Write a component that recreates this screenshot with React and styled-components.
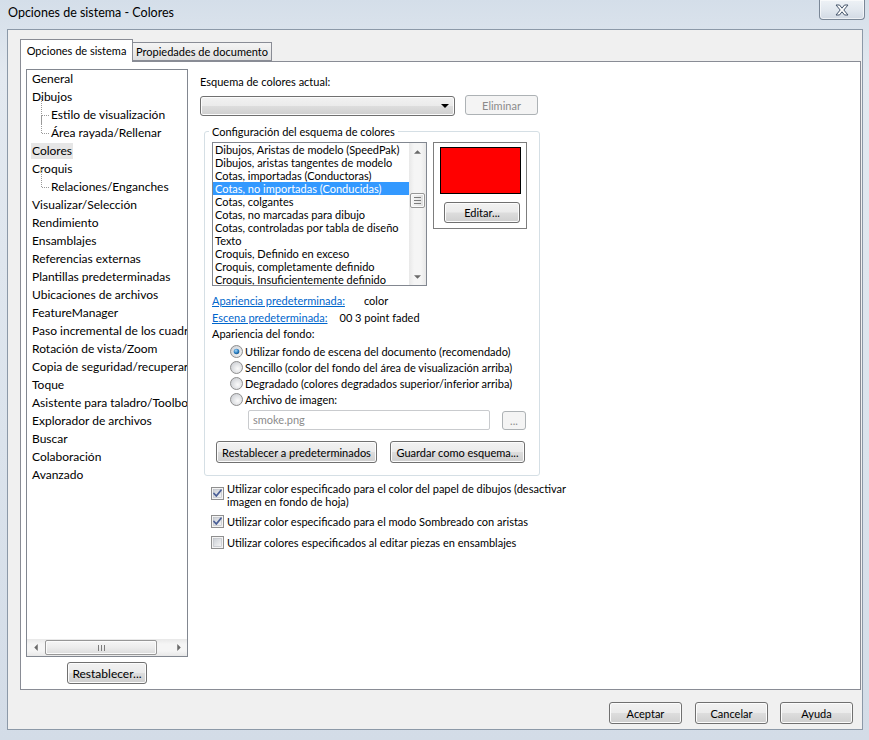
import React from 'react';
import styled, { createGlobalStyle, css } from 'styled-components';

const GlobalStyle = createGlobalStyle`
  html, body { margin: 0; padding: 0; }
  body {
    font-family: Lato, "Noto Sans", sans-serif;
    font-size: 11px;
    color: #000;
    background: #dce5ee;
  }
  * { box-sizing: border-box; }
`;

const btnFace = css`
  border: 1px solid #707070;
  border-radius: 3px;
  background: linear-gradient(180deg, #f2f2f2 0%, #ebebeb 48%, #dddddd 52%, #cfcfcf 100%);
  box-shadow: inset 0 0 0 1px #fcfcfc;
`;

const Window = styled.div`
  width: 869px;
  height: 740px;
  display: flex;
  flex-direction: column;
  overflow: hidden;
  background: linear-gradient(180deg, #d4dee9 0%, #e3e9f0 10%, #dbe3ec 60%, #d3dce7 100%);
`;

const TitleBar = styled.div`
  height: 29px;
  flex: none;
  display: flex;
  align-items: flex-start;
`;

const Title = styled.div`
  padding: 5px 0 0 8px;
  font-size: 12.5px;
  line-height: 16px;
`;

const CloseBtn = styled.div`
  margin-left: auto;
  margin-right: 4px;
  width: 46px;
  height: 20px;
  border: 1px solid #7a8797;
  border-top: none;
  border-radius: 0 0 4px 4px;
  background: linear-gradient(180deg, #eef2f6 0%, #e2e8ef 50%, #d2dae4 100%);
  box-shadow: inset 0 0 0 1px rgba(255,255,255,0.6);
  display: flex;
  align-items: center;
  justify-content: center;
`;

const Client = styled.div`
  flex: 1;
  margin: 0 6px 10px 7px;
  border: 1px solid #8c99a8;
  background: #f0f0f0;
  display: flex;
  flex-direction: column;
  padding: 9px 1px 5px 12px;
`;

const TabRow = styled.div`
  display: flex;
  align-items: flex-end;
  height: 22px;
  position: relative;
  z-index: 1;
`;

const Tab = styled.div`
  height: ${p => (p.$active ? 23 : 19)}px;
  margin-bottom: ${p => (p.$active ? -1 : 0)}px;
  width: ${p => p.$w}px;
  border: 1px solid #898c95;
  border-bottom: ${p => (p.$active ? 'none' : '1px solid #898c95')};
  border-left: ${p => (p.$first ? '1px solid #898c95' : 'none')};
  background: ${p => (p.$active ? '#fff' : 'linear-gradient(180deg, #f4f4f4 0%, #ebebeb 50%, #dedede 100%)')};
  display: flex;
  align-items: center;
  justify-content: center;
  padding-bottom: ${p => (p.$active ? 1 : 0)}px;
  white-space: nowrap;
`;

const Panel = styled.div`
  flex: 1;
  border: 1px solid #898c95;
  background: #fff;
  display: flex;
  padding: 7px 5px 5px 5px;
  min-height: 0;
`;

const LeftCol = styled.div`
  width: 162px;
  flex: none;
  display: flex;
  flex-direction: column;
  align-items: center;
`;

const Tree = styled.div`
  width: 162px;
  height: 588px;
  border: 1px solid #828790;
  display: flex;
  flex-direction: column;
  overflow: hidden;
  font-size: 12px;
`;

const TreeList = styled.div`
  flex: 1;
  overflow: hidden;
`;

const TreeRow = styled.div`
  position: relative;
  height: 18px;
  line-height: 18px;
  white-space: nowrap;
  padding-left: ${p => (p.$child ? 24 : 5)}px;
  ${p => p.$child && css`
    &::before {
      content: '';
      position: absolute;
      left: 14px;
      top: -9px;
      height: ${p.$last ? 18 : 27}px;
      border-left: 1px dotted #9a9a9a;
    }
    &::after {
      content: '';
      position: absolute;
      left: 15px;
      top: 9px;
      width: 7px;
      border-top: 1px dotted #9a9a9a;
    }
  `}
`;

const TreeText = styled.span`
  display: inline-block;
  line-height: 16px;
  padding: 0 1px;
  margin-left: -1px;
  background: ${p => (p.$sel ? '#e6e6e6' : 'transparent')};
`;

const HScroll = styled.div`
  height: 17px;
  flex: none;
  display: flex;
  align-items: center;
  background: linear-gradient(180deg, #e8e8e8 0%, #f5f5f5 30%, #f5f5f5 70%, #e8e8e8 100%);
`;

const ArrowCell = styled.div`
  width: 17px;
  height: 17px;
  flex: none;
  display: flex;
  align-items: center;
  justify-content: center;
`;

const HThumb = styled.div`
  width: 112px;
  flex: none;
  height: 15px;
  margin-left: 1px;
  border: 1px solid #979797;
  border-radius: 2px;
  background: linear-gradient(180deg, #f6f6f6 0%, #ececec 50%, #dcdcdc 100%);
  box-shadow: inset 0 0 0 1px #fbfbfb;
  display: flex;
  align-items: center;
  justify-content: center;
  gap: 2px;
`;

const Spacer = styled.div`
  flex: 1;
`;

const GripLine = styled.span`
  width: ${p => (p.$v ? 1 : 7)}px;
  height: ${p => (p.$v ? 6 : 1)}px;
  background: #7c7c7c;
`;

const Btn = styled.button`
  width: ${p => p.$w}px;
  height: ${p => p.$h || 21}px;
  padding: 0;
  font: inherit;
  font-size: ${p => p.$fs || 11}px;
  color: #000;
  white-space: nowrap;
  flex: none;
  ${btnFace}
  ${p => p.disabled && css`
    color: #8b8b8b;
    border-color: #adb2b5;
    background: #f4f4f4;
    box-shadow: none;
  `}
  margin-top: ${p => p.$mt || 0}px;
  margin-left: ${p => p.$ml || 0}px;
`;

const RightCol = styled.div`
  margin-left: 12px;
  display: flex;
  flex-direction: column;
  align-items: flex-start;
`;

const Label = styled.div`
  line-height: 15px;
  white-space: nowrap;
  margin-top: ${p => p.$mt || 0}px;
`;

const SchemeRow = styled.div`
  display: flex;
  align-items: flex-start;
  margin-top: 6px;
`;

const Combo = styled.div`
  width: 255px;
  height: 20px;
  margin-top: 1px;
  ${btnFace}
  display: flex;
  align-items: center;
  justify-content: flex-end;
  padding-right: 5px;
`;

const ComboArrow = styled.span`
  width: 0;
  height: 0;
  border-left: 4px solid transparent;
  border-right: 4px solid transparent;
  border-top: 4px solid #000;
`;

const Group = styled.fieldset`
  margin: 8px 0 0 4px;
  padding: 0;
  width: 336px;
  border: 1px solid #d5dfe5;
  border-radius: 3px;
`;

const Legend = styled.legend`
  margin-left: 4px;
  padding: 0 3px;
  line-height: 15px;
`;

const GroupBody = styled.div`
  padding: 3px 7px 12px 7px;
  display: flex;
  flex-direction: column;
  align-items: flex-start;
`;

const TopRow = styled.div`
  display: flex;
  align-items: flex-start;
`;

const ListBox = styled.div`
  width: 215px;
  height: 144px;
  border: 1px solid #828790;
  display: flex;
  overflow: hidden;
`;

const ListItems = styled.div`
  flex: 1;
  overflow: hidden;
`;

const ListItem = styled.div`
  height: 13px;
  line-height: 13px;
  padding-left: 2px;
  white-space: nowrap;
  background: ${p => (p.$sel ? '#3399ff' : 'transparent')};
  color: ${p => (p.$sel ? '#fff' : '#000')};
`;

const VScroll = styled.div`
  width: 17px;
  flex: none;
  display: flex;
  flex-direction: column;
  align-items: center;
  background: linear-gradient(90deg, #e8e8e8 0%, #f5f5f5 30%, #f5f5f5 70%, #e8e8e8 100%);
`;

const VThumb = styled.div`
  width: 15px;
  height: 15px;
  margin-top: 33px;
  border: 1px solid #979797;
  border-radius: 2px;
  background: linear-gradient(90deg, #f6f6f6 0%, #ececec 50%, #dcdcdc 100%);
  box-shadow: inset 0 0 0 1px #fbfbfb;
  display: flex;
  flex-direction: column;
  align-items: center;
  justify-content: center;
  gap: 2px;
`;

const ColorPanel = styled.div`
  margin-left: 6px;
  width: 94px;
  height: 87px;
  border: 1px solid #7d7d7d;
  padding: 4px 0 0 6px;
  display: flex;
  flex-direction: column;
  align-items: flex-start;
`;

const Swatch = styled.div`
  width: 81px;
  height: 47px;
  border: 1px solid #000;
  background: ${p => p.$c};
`;

const InfoRow = styled.div`
  display: flex;
  line-height: 15px;
  white-space: nowrap;
  margin-top: ${p => p.$mt || 0}px;
`;

const Link = styled.span`
  color: #0066cc;
  text-decoration: underline;
`;

const Value = styled.span`
  margin-left: ${p => p.$gap}px;
`;

const RadioList = styled.div`
  margin-top: 2px;
  padding-left: 18px;
  display: flex;
  flex-direction: column;
`;

const RadioRow = styled.div`
  height: 16px;
  display: flex;
  align-items: center;
  gap: 2px;
  white-space: nowrap;
`;

const FileRow = styled.div`
  display: flex;
  align-items: flex-start;
  margin: 3px 0 0 36px;
`;

const TextBox = styled.div`
  width: 242px;
  height: 20px;
  border: 1px solid #c9cbce;
  border-radius: 2px;
  background: #fff;
  color: #8b8b8b;
  padding-left: 4px;
  line-height: 18px;
`;

const ButtonRow = styled.div`
  display: flex;
  margin: 11px 0 0 4px;
`;

const CheckRow = styled.div`
  display: flex;
  align-items: ${p => (p.$multi ? 'flex-start' : 'center')};
  gap: 3px;
  margin: ${p => p.$mt}px 0 0 11px;
  line-height: ${p => (p.$multi ? 13 : 15)}px;
`;

const CheckText = styled.div`
  max-width: 352px;
`;

const CheckBoxWrap = styled.span`
  display: flex;
  flex: none;
  margin-top: ${p => (p.$multi ? 5 : 0)}px;
`;

const BottomBar = styled.div`
  display: flex;
  justify-content: flex-end;
  margin-top: 12px;
  padding-right: 8px;
`;

const Arrow = ({ dir }) => {
  const pts = {
    up: '0,4 4,0 8,4',
    down: '0,0 8,0 4,4',
    left: '4,0 4,8 0,4',
    right: '0,0 0,8 4,4',
  }[dir];
  const vertical = dir === 'up' || dir === 'down';
  return (
    <svg width={vertical ? 7 : 4} height={vertical ? 4 : 7} viewBox={vertical ? '0 0 8 4' : '0 0 4 8'}>
      <polygon points={pts} fill="#6a6a6a" />
    </svg>
  );
};

const CheckBox = ({ checked, multi }) => (
  <CheckBoxWrap $multi={multi}>
    <svg width="13" height="13" viewBox="0 0 13 13">
      <defs>
        <linearGradient id="cbg" x1="0" y1="0" x2="1" y2="1">
          <stop offset="0" stopColor="#cbcfd5" />
          <stop offset="1" stopColor="#f6f6f6" />
        </linearGradient>
      </defs>
      <rect x="0.5" y="0.5" width="12" height="12" fill="#f4f4f4" stroke="#8f8f8f" />
      <rect x="2.5" y="2.5" width="8" height="8" fill="url(#cbg)" stroke="#b7bbc1" strokeWidth="0.6" />
      {checked && (
        <path d="M3 6.5 L5.3 9 L10 3.3" fill="none" stroke="#4a5f97" strokeWidth="1.8" strokeLinecap="round" strokeLinejoin="round" />
      )}
    </svg>
  </CheckBoxWrap>
);

const Radio = ({ checked }) => (
  <svg width="13" height="13" viewBox="0 0 13 13" style={{ flex: 'none' }}>
    <defs>
      <radialGradient id="rbg" cx="0.6" cy="0.6" r="0.7">
        <stop offset="0" stopColor="#fbfbfb" />
        <stop offset="1" stopColor="#c9ccd1" />
      </radialGradient>
      <radialGradient id="rdot" cx="0.4" cy="0.35" r="0.7">
        <stop offset="0" stopColor="#a8d8f7" />
        <stop offset="0.6" stopColor="#2a7fc4" />
        <stop offset="1" stopColor="#1b4f7a" />
      </radialGradient>
    </defs>
    <circle cx="6.5" cy="6.5" r="6" fill="url(#rbg)" stroke="#8f8f8f" />
    {checked && <circle cx="6.5" cy="6.5" r="2.8" fill="url(#rdot)" />}
  </svg>
);

const treeItems = [
  { t: 'General' },
  { t: 'Dibujos' },
  { t: 'Estilo de visualización', child: true },
  { t: 'Área rayada/Rellenar', child: true, last: true },
  { t: 'Colores', sel: true },
  { t: 'Croquis' },
  { t: 'Relaciones/Enganches', child: true, last: true },
  { t: 'Visualizar/Selección' },
  { t: 'Rendimiento' },
  { t: 'Ensamblajes' },
  { t: 'Referencias externas' },
  { t: 'Plantillas predeterminadas' },
  { t: 'Ubicaciones de archivos' },
  { t: 'FeatureManager' },
  { t: 'Paso incremental de los cuadros de giro' },
  { t: 'Rotación de vista/Zoom' },
  { t: 'Copia de seguridad/recuperar' },
  { t: 'Toque' },
  { t: 'Asistente para taladro/Toolbox' },
  { t: 'Explorador de archivos' },
  { t: 'Buscar' },
  { t: 'Colaboración' },
  { t: 'Avanzado' },
];

const listItems = [
  'Dibujos, Aristas de modelo (SpeedPak)',
  'Dibujos, aristas tangentes de modelo',
  'Cotas, importadas (Conductoras)',
  'Cotas, no importadas (Conducidas)',
  'Cotas, colgantes',
  'Cotas, no marcadas para dibujo',
  'Cotas, controladas por tabla de diseño',
  'Texto',
  'Croquis, Definido en exceso',
  'Croquis, completamente definido',
  'Croquis, Insuficientemente definido',
];

const radios = [
  'Utilizar fondo de escena del documento (recomendado)',
  'Sencillo (color del fondo del área de visualización arriba)',
  'Degradado (colores degradados superior/inferior arriba)',
  'Archivo de imagen:',
];

export default function App() {
  return (
    <>
      <GlobalStyle />
      <Window>
        <TitleBar>
          <Title>Opciones de sistema - Colores</Title>
          <CloseBtn>
            <svg width="14" height="12" viewBox="0 0 14 12">
              <path
                d="M1 1 H4.5 L7 4.2 L9.5 1 H13 L8.8 6 L13 11 H9.5 L7 7.8 L4.5 11 H1 L5.2 6 Z"
                fill="#fdfdfd"
                stroke="#44546a"
                strokeWidth="1"
                strokeLinejoin="round"
              />
            </svg>
          </CloseBtn>
        </TitleBar>
        <Client>
          <TabRow>
            <Tab $active $first $w={113}>Opciones de sistema</Tab>
            <Tab $w={139}>Propiedades de documento</Tab>
          </TabRow>
          <Panel>
            <LeftCol>
              <Tree>
                <TreeList>
                  {treeItems.map((it) => (
                    <TreeRow key={it.t} $child={it.child} $last={it.last}>
                      <TreeText $sel={it.sel}>{it.t}</TreeText>
                    </TreeRow>
                  ))}
                </TreeList>
                <HScroll>
                  <ArrowCell><Arrow dir="left" /></ArrowCell>
                  <HThumb>
                    <GripLine $v /><GripLine $v /><GripLine $v />
                  </HThumb>
                  <Spacer />
                  <ArrowCell><Arrow dir="right" /></ArrowCell>
                </HScroll>
              </Tree>
              <Btn $w={80} $h={22} $mt={5} $fs={12}>Restablecer...</Btn>
            </LeftCol>
            <RightCol>
              <Label $mt={5}>Esquema de colores actual:</Label>
              <SchemeRow>
                <Combo><ComboArrow /></Combo>
                <Btn $w={73} $h={20} $ml={10} disabled>Eliminar</Btn>
              </SchemeRow>
              <Group>
                <Legend>Configuración del esquema de colores</Legend>
                <GroupBody>
                  <TopRow>
                    <ListBox>
                      <ListItems>
                        {listItems.map((t, i) => (
                          <ListItem key={t} $sel={i === 3}>{t}</ListItem>
                        ))}
                      </ListItems>
                      <VScroll>
                        <ArrowCell><Arrow dir="up" /></ArrowCell>
                        <VThumb>
                          <GripLine /><GripLine /><GripLine />
                        </VThumb>
                        <Spacer />
                        <ArrowCell><Arrow dir="down" /></ArrowCell>
                      </VScroll>
                    </ListBox>
                    <ColorPanel>
                      <Swatch $c="#ff0000" />
                      <Btn $w={76} $h={21} $mt={8} $ml={4}>Editar...</Btn>
                    </ColorPanel>
                  </TopRow>
                  <InfoRow $mt={7}>
                    <Link>Apariencia predeterminada:</Link>
                    <Value $gap={19}>color</Value>
                  </InfoRow>
                  <InfoRow $mt={2}>
                    <Link>Escena predeterminada:</Link>
                    <Value $gap={12}>00 3 point faded</Value>
                  </InfoRow>
                  <Label $mt={1}>Apariencia del fondo:</Label>
                  <RadioList>
                    {radios.map((t, i) => (
                      <RadioRow key={t}>
                        <Radio checked={i === 0} />
                        <span>{t}</span>
                      </RadioRow>
                    ))}
                  </RadioList>
                  <FileRow>
                    <TextBox>smoke.png</TextBox>
                    <Btn $w={24} $h={19} $ml={12} $mt={1} disabled>...</Btn>
                  </FileRow>
                  <ButtonRow>
                    <Btn $w={161} $h={22}>Restablecer a predeterminados</Btn>
                    <Btn $w={135} $h={22} $ml={13}>Guardar como esquema...</Btn>
                  </ButtonRow>
                </GroupBody>
              </Group>
              <CheckRow $multi $mt={6}>
                <CheckBox checked multi />
                <CheckText>Utilizar color especificado para el color del papel de dibujos (desactivar imagen en fondo de hoja)</CheckText>
              </CheckRow>
              <CheckRow $mt={6}>
                <CheckBox checked />
                <CheckText>Utilizar color especificado para el modo Sombreado con aristas</CheckText>
              </CheckRow>
              <CheckRow $mt={6}>
                <CheckBox />
                <CheckText>Utilizar colores especificados al editar piezas en ensamblajes</CheckText>
              </CheckRow>
            </RightCol>
          </Panel>
          <BottomBar>
            <Btn $w={73} $h={22}>Aceptar</Btn>
            <Btn $w={73} $h={22} $ml={13}>Cancelar</Btn>
            <Btn $w={73} $h={22} $ml={12}>Ayuda</Btn>
          </BottomBar>
        </Client>
      </Window>
    </>
  );
}
